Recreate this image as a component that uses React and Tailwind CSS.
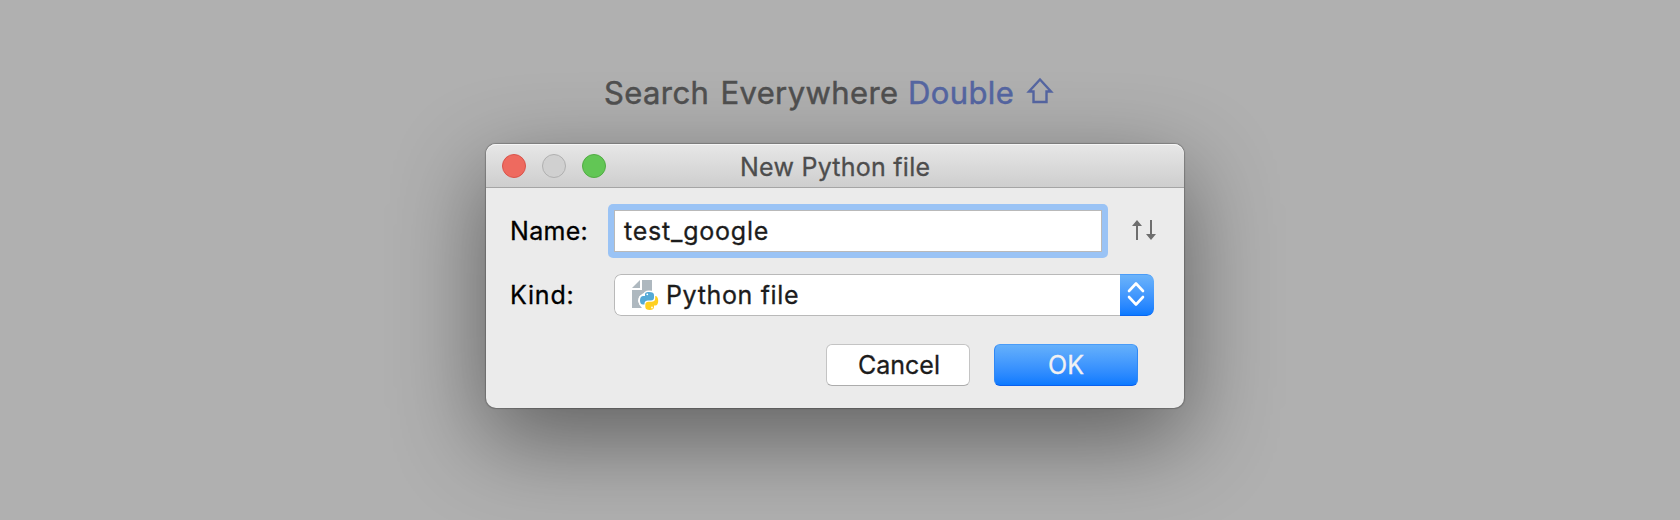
const ShiftIcon = () => (
  <svg className="ml-[12px] mt-[4px]" width="28" height="28" viewBox="0 0 28 28" fill="none" stroke="#5566a2" strokeWidth="2.4">
    <path d="M14 2.500 25 14.500H20.500V25H7.500V14.500H3Z" />
  </svg>
);

const SortIcon = () => (
  <svg className="ml-6 -mt-[2px]" width="24" height="20" viewBox="0 0 24 20" fill="#6e6e6e">
    <path d="M5 0 10 6H6V20H4V6H0Z" />
    <path d="M19 20 14 14H18V0H20V14H24Z" />
  </svg>
);

const PythonFileIcon = () => (
  <svg width="28" height="30" viewBox="0 0 28 30">
    <path d="M8 0V8H0ZM10 0H20V12H14Q6 15 6 21Q7 25 10 28H0V10H10Z" fill="#aeb8bf" />
    <path
      d="M17 12C13.500 12 13 13 13 15V16H11.500C9 16 8 18 8 20.500C8 23 9 24.500 11 24.500H12.500V23.500C12.500 21.500 14 20.500 16 20.500H19C21 20.500 22 19.500 22 17.500V15C22 13 20.500 12 17 12Z"
      fill="#54a9d6"
      stroke="#fff"
      strokeWidth="3"
      paintOrder="stroke"
    />
    <path
      d="M23.200 16V18.500C23.200 20.700 21.500 21.800 19.500 21.800H16.500C14.500 21.800 13.300 23 13.300 25V27C13.300 29 15 30 17.700 30C20.500 30 22 29 22 27V25.500H23.200C25.200 25.500 26.200 23.500 26.200 21C26.200 18 25.200 16 23.200 16Z"
      fill="#ffd021"
    />
    <circle cx="15.300" cy="14.300" r="0.900" fill="#fff" />
    <circle cx="20" cy="27.500" r="0.900" fill="#fff" />
  </svg>
);

const ChevronsIcon = () => (
  <svg width="18" height="26" viewBox="0 0 18 26" fill="none" stroke="#fff" strokeWidth="2.600" strokeLinecap="round" strokeLinejoin="round">
    <path d="M2 10 9 2.500 16 10M2 16 9 23.500 16 16" />
  </svg>
);

export default function App() {
  return (
    <main className="flex h-[520px] w-[1680px] flex-col overflow-hidden bg-[#b0b0b0] font-['Inter',sans-serif] text-[25px] leading-[30px] whitespace-nowrap [-webkit-text-stroke:0.3px]">
      <header className="flex h-36 items-start pt-[73px] pl-[604px] text-[31px] leading-10 text-[#505050] [-webkit-text-stroke:0.5px]">
        <span className="w-[306px] shrink-0 tracking-[0.4px] [word-spacing:2px]">Search Everywhere</span>
        <span className="-ml-[2px] tracking-[0.4px] text-[#5566a2]">Double</span>
        <ShiftIcon />
      </header>

      <section className="ml-[486px] flex h-[264px] w-[698px] flex-col rounded-[10px] bg-[#ebebeb] shadow-[0_0_1px_1px_rgba(0,0,0,0.22),0_30px_90px_2px_rgba(0,0,0,0.45)]">
        <div className="grid h-11 shrink-0 grid-cols-[254px_1fr] items-center rounded-t-[10px] border-b border-[#a5a5a5] bg-linear-to-b from-[#e7e7e7] to-[#cecece] shadow-[inset_0_1px_0_#f5f5f5]">
          <div className="flex gap-4 pl-4">
            <span className="size-6 rounded-full border border-[#d9534a] bg-[#ee6a5f]" />
            <span className="size-6 rounded-full border border-[#b0b0b0] bg-[#d0d0d0]" />
            <span className="size-6 rounded-full border border-[#51ac43] bg-[#62c655]" />
          </div>
          <h1 className="pt-[3px] tracking-[0.25px] text-[#4d4d4d]">New Python file</h1>
        </div>

        <div className="mt-4 flex h-[54px] shrink-0 items-center pl-6 text-black">
          <label className="w-[98px] tracking-[0.3px]" htmlFor="name">Name:</label>
          <div className="h-[54px] w-[500px] rounded-[5px] bg-[#9ac3f5] p-[6px]">
            <div id="name" className="flex h-[42px] items-center border border-[#b9b9b9] bg-white pl-[9px] tracking-[0.78px] text-[#1c1c1c]">
              test_google
            </div>
          </div>
          <SortIcon />
        </div>

        <div className="mt-4 flex h-[42px] shrink-0 items-center pl-6 text-black">
          <span className="w-[104px] tracking-[0.8px]">Kind:</span>
          <div className="flex h-[42px] w-[540px] overflow-hidden rounded-[7px]">
            <div className="flex w-[506px] items-center gap-[6px] rounded-l-[7px] border border-r-0 border-[#b9b9b9] bg-white pl-[17px] tracking-[0.65px] text-[#1c1c1c]">
              <PythonFileIcon />
              <span>Python file</span>
            </div>
            <div className="flex w-[34px] items-center justify-center rounded-r-[7px] border-y border-t-[#4a9cf8] border-b-[#0a66f0] bg-linear-to-b from-[#6bb3fa] to-[#0a7aff] pr-[2px] pb-[3px]">
              <ChevronsIcon />
            </div>
          </div>
        </div>

        <div className="mt-7 flex h-[42px] shrink-0 gap-6 pl-[340px]">
          <button className="w-36 rounded-[6px] border border-[#c4c4c4] border-b-[#acacac] bg-white pl-[2px] text-[#1c1c1c]">Cancel</button>
          <button className="w-36 rounded-[6px] border border-[#2f88f5] border-t-[#4a9cf8] border-b-[#0a60ee] bg-linear-to-b from-[#65b0fb] to-[#0a7aff] text-[#f1f1f3]">OK</button>
        </div>
      </section>
    </main>
  );
}
